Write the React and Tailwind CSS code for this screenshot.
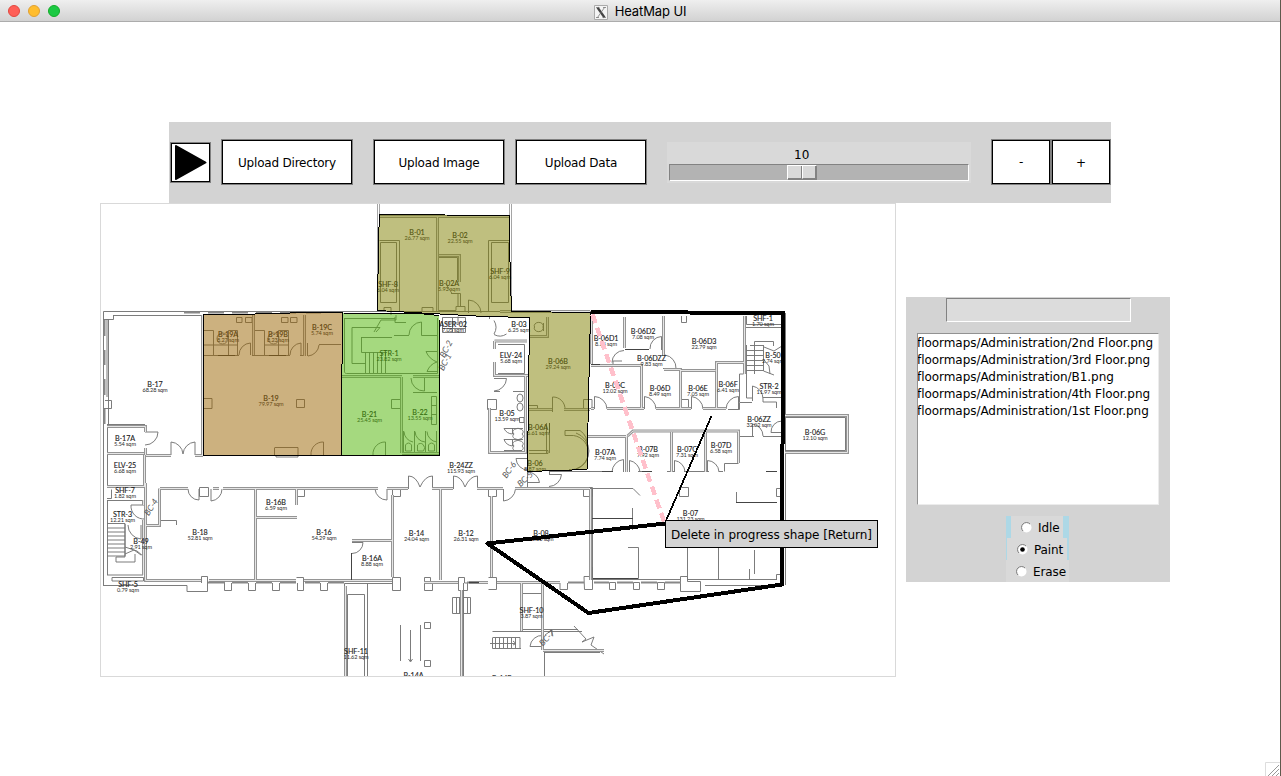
import React from "react";

const rooms = [
  ["B-17", 155, 384, "68.28"], ["B-19A", 228, 334, "8.27"], ["B-19B", 278, 334, "8.23"],
  ["B-19C", 322, 327, "5.74"], ["B-19", 271, 398, "79.97"], ["B-01", 417, 232, "26.77"],
  ["B-02", 460, 235.5, "22.55"], ["SHF-8", 388, 284.5, "6.04"], ["B-02A", 449, 283, "5.93"],
  ["SHF-9", 500, 271, "6.04"], ["ASER-02", 453, 324.5, "7.05"], ["B-03", 519, 324, "6.25"],
  ["STR-1", 389, 353.5, "23.82"], ["ELV-24", 511, 355.5, "5.68"], ["B-06B", 558, 361, "29.24"],
  ["B-21", 369.5, 414, "25.45"], ["B-22", 420, 412.5, "13.55"], ["B-05", 507, 413, "13.59"],
  ["B-06A", 538, 427.5, "6.61"], ["B-06", 535, 463.5, "8.87"], ["B-06D1", 606, 338, "8.13"],
  ["B-06D2", 643, 331, "7.08"], ["B-06D3", 704, 341, "22.79"], ["B-06DZZ", 651.5, 358.5, "9.83"],
  ["B-06C", 615, 385, "12.02"], ["B-06D", 660, 388, "8.49"], ["B-06E", 698, 388, "7.05"],
  ["B-06F", 728, 384, "6.41"], ["SHF-1", 763, 318, "1.70"], ["B-50", 773, 355, "2.74"],
  ["STR-2", 769, 386.5, "11.97"], ["B-06ZZ", 759, 419.5, "32.02"], ["B-06G", 815, 432, "12.10"],
  ["B-07A", 605, 452, "7.74"], ["B-07B", 648, 449, "7.92"], ["B-07C", 687, 449, "7.31"],
  ["B-07D", 721, 445, "6.58"], ["B-17A", 125, 438, "5.54"], ["ELV-25", 125, 465, "6.68"],
  ["SHF-7", 125, 490.5, "1.82"], ["STR-3", 122.5, 514.5, "12.21"], ["B-49", 141, 541, "2.91"],
  ["SHF-5", 128, 584, "0.79"], ["B-18", 200, 532, "52.81"], ["B-16B", 276, 502, "6.59"],
  ["B-16", 324, 532, "54.29"], ["B-24ZZ", 461, 465, "115.93"], ["B-14", 416.5, 533.5, "24.04"],
  ["B-12", 466, 533.5, "26.31"], ["B-08", 541, 533.5, "52.36"], ["B-07", 690.5, 513.5, "131.23"],
  ["B-16A", 372, 558, "8.88"], ["SHF-10", 531.5, 610, "3.87"], ["SHF-11", 356, 651, "11.62"],
  ["B-14A", 413.5, 675.5, ""], ["B-14B", 502, 678, ""],
];

const passages = [
  ["BC-4", 151, 507, -58], ["BC-6", 509, 470, -55], ["BC-5", 525, 479, -42],
  ["BC-7", 547, 638, -45], ["BC-2", 446, 349, -62], ["BC-1", 445, 362, -62],
];

// Double-line walls: drawn once wide and dark, then again with a light core.
const walls = [
  "M202.5 315V455M146 455.5H171M195 455.5H203",
  "M107 426.500H145.500V432M145.500 448V455M107 453.500H144M144.500 455V487M107 486.500H144M143.500 500V505M143.500 520V575",
  "M145.5 483V525M160 488.5H188M213 488.5H219M223 488.5H378M387 488.5H408M432 488.5H453M477 488.5H503M515 488.5H589",
  "M159.500 488.5V525.500H146M145.500 525V580.5H201M209 580.5H296M304 580.5H392",
  "M255.5 489V580M256 517.5H297M296.500 489V505M392.500 495V577M352 540.500H393",
  "M440.5 489V580M491.500 496V577M590.500 489V580M424 582.500H458M469 582.500H488M497 582.500H560",
  "M437.5 217V311M380 216.500H509M439 255.500H459.500V282M500 311.5H590",
  "M253.500 315V355M304.500 315V356",
  "M342 376.5H402M413 376.5H439M401.500 377V453M402 453.500H439",
  "M494.500 341H527M494.500 341V349M494.500 362V375.500H528M489.500 408V452.500H525.500V376",
  "M547.500 317V336.500H530M529 409.500H552M564 409.500H590",
  "M591.500 317V364M624.5 317V348M663.5 316V356M591 365.5H641.500V408M664 369.500H680.500V408M680 370.500H715.500M716.500 408V362.500H744M744.500 316V374",
  "M591 408.500H594M607 408.500H644M656 408.500H691M703 408.500H726",
  "M588 436.500H626M627.500 436L633 431H738.500V463M626.500 436V472M671.500 432V472M705.5 431V472",
  "M785 415.500H847.5V452.500H785",
  "M345.5 677V586M461.5 590V677M521.500 583V631M542.500 583V650M543 650.500H604",
];

const thin = [
  "M103.500 585V311.500H785M113.5 315.5H202M108.5 319V425M103 319.500H113.500V315M103 585.500H187V591.500H207.500V583",
  "M107 319V397M105 400.500H111.500V408.500H104",
  "M107 424.5H145M107.500 427V487M107.500 500V575M107 498.500H111.500V489.500M107 500.500H143",
  "M112 577.500H143.500V581H112ZM107 523.500H125V556H107M107 575H143M125 524V557H116V562H135V554M107 528H125M107 532H125M107 536H125M107 540H125M107 544H125M107 548H125M107 552H125M125 547L137 551L143 556M125 554L134 550L141 555",
  "M145 432H158A13 13 0 0 1 145 445M171 455V442A13 13 0 0 1 183 454A13 13 0 0 1 195 442V455",
  "M145 519A13 13 0 0 1 131 505H145M128 525A14 14 0 0 0 141 539V525M188 489A11 11 0 0 0 199 500V489M211 489V501A12 12 0 0 0 222 489M375 489A12 12 0 0 0 387 500V489",
  "M160 520.500H176.500V525M199.500 487.500H208.500V496.500H199.500ZM296.500 487.500H304.500V496.500H296.500ZM392.500 487.500H400.500V496.500H392.500ZM488.500 487.500H496.500V496.500H488.500ZM583.500 487.500H592.500V496.500H583.500Z",
  "M201.500 398.500H212V408.500H201.500ZM296.500 399.500H304.500V407.500H296.500ZM391.500 399.500H400.500V408.500H391.500ZM487.500 399.500H496.500V409.500H487.500ZM488.500 577.500H496.500V589.500H488.500",
  "M204 355.500H239M252 355.500H290M300 355.500H305M319 344.500H341M204 330.500H213.500V355M204 345H238M237.500 355V330.500H228.500V355M236.500 317.500H242V322.500H236.500ZM245.500 317.500H252V322.500H245.500ZM281.500 317.500H288V322.500H281.500ZM290.500 317.500H297V322.500H290.500ZM254.500 330.500H264.500V355M265 345H288M288.500 355V330.500H278.500V355",
  "M217 338.500A5.500 5.500 0 1 0 228 338.500A5.500 5.500 0 1 0 217 338.500M268 338.500A5.500 5.500 0 1 0 279 338.500A5.500 5.500 0 1 0 268 338.500",
  "M239 355A12 12 0 0 1 250.500 343V355M290 355A12 12 0 0 1 301 343V355M308 356A12 12 0 0 0 319 345M307.500 356V343M311 455A12 12 0 0 1 323.500 442V455M274.500 447.500H298V457H276V455M274.500 448V455",
  "M379.500 240.500H399.500V311M380.500 242.500H396.500V302.500H380.500ZM509 240.500H488.500V311M491.500 242.500H508.5V302.500H491.5ZM439 257.500H457.500V280M446 284L452 293.500H460.500V306M451 293.500H458V306M468.5 313V300A13 13 0 0 1 481 313M439 310.500H456V306.500H465V311M422 311V307.500H433V311M384 311V307.500H391V315",
  "M344 318.500H395M344.500 318V371A2 2 0 0 0 346.500 373.500H437.500V318M352 363.500V327.500H380L376 332M352 363.500H366M361 337.500H392M361.500 337V352.500H387M365.500 352V373M369.500 352V373M373.500 352V373M377.500 352V373M381.500 352V373M385.500 352V373M374 332L381 320H396V315",
  "M395 317V322.500H406M409 335A13 13 0 0 1 421.500 322V335.500H437M394 335.500H409M437 351.500H426Q429 359 437 362Q430 364 427 371.500H437M411 378A13 13 0 0 0 424.500 391V378M413 392.500H437",
  "M373 455A12 12 0 0 1 385.500 442V455M404 431.500A11 11 0 0 0 413 442M415 431.500A11 11 0 0 0 425 442M427 431.500A11 11 0 0 0 437 442M403.500 431V452M414.500 431V452M425.500 431V452M436.500 431V452M405.500 451V445A3.500 4 0 0 1 411.500 445V451ZM417.500 451V445A3.500 4 0 0 1 423.500 451V451ZM428.500 451V445A3.500 4 0 0 1 434.500 445V451Z",
  "M431.500 396.500H436.500V424.500H431.500ZM431 405.500H437M431 414.500H437",
  "M498 344.500H524.500V373.500H498M494 334.500A12 12 0 0 0 506.500 334M494 334A13 13 0 0 0 494 320.500M494 391A13 13 0 0 0 506.500 378.500H494M494 391.500H500M513 391.500H527M517 398A3 4 0 1 0 523 398A3 4 0 1 0 517 398M517 407A3 4 0 1 0 523 407A3 4 0 1 0 517 407M519.500 417.500H524V422.500H519.500ZM512.500 428V434A10 10 0 0 1 504 428.500H523M512.500 440V446A10 10 0 0 1 504 439.500H523M512.500 451A10 10 0 0 1 504 450.500H522M514 434A5 3.500 0 1 0 522 434A5 3.500 0 1 0 514 434M514 446A5 3.500 0 1 0 522 446A5 3.500 0 1 0 514 446",
  "M489.500 319V316M458 316.500V322.500M442.500 317.500H465.500V332.500H442.500ZM452.500 318V333M445 323H462M442 328.500H465",
  "M534.500 327A4.500 3.500 0 1 0 543 327A4.500 3.500 0 1 0 534.500 327M543.500 323V331M552.500 412V397A12 12 0 0 1 565 410M549.500 423V453M546.500 423V453M529 405.500H537.500V410M583.500 399.500H592V408.500H583.500Z",
  "M565 430.500H580Q588 436 587 446M565 430.500V435.500H573.500A17 17 0 0 1 569 469.500M576 433A19 19 0 0 1 576 469M529 450.500H548V453.500H529",
  "M528 458.500H516A12 12 0 0 0 528 470M527.500 487V472A12 12 0 0 1 539.500 482.500H528M549 474.500H561.500A13 13 0 0 1 549 486.500M549 471.500H590M549.500 474V471",
  "M681.500 316V322.500H686.500V316M612 362.500A12 12 0 0 1 624 350.500M613 364V361H622M650 349A12 12 0 0 1 661.500 336.500V350M665 355A13 13 0 0 1 676 368.500H663M594.500 409V396.500A13 13 0 0 1 607 409M644.500 409V396.500A13 13 0 0 1 656 409M691.500 409V396.500A13 13 0 0 1 703 409M738.500 409V396.500A13 13 0 0 0 726 409M728 409.500H739.500V402.500H752",
  "M680.500 399.500H688.500V409H680.500ZM623.500 472V459.500A13 13 0 0 0 612 472M629.500 472V460.500A13 13 0 0 1 640 472M674.500 472V460.500A12 12 0 0 1 685 472M707.500 472V460.500A12 12 0 0 1 719 472M738.500 463.500H724.500V471.500",
  "M588 471.500H613M638 471.500H652M667 471.500H674M684 471.500H709M719 471.500H723",
  "M746.500 316V324.500H781M746 327.500H781M750 345.500H763M746 350.500H763M746 355.500H763M746 360.500H763M746 365.500H763M746 370.500H763M754.500 374V341.500H773.500V346M763.500 345V371L774 375M764 347L774 351L782 346M764 360L769 366L770 374M746.500 345V398H752M743.500 374H739.500V402M752.500 401V386A13 13 0 0 1 763 399V402H776.500V408M763 397.500H782M782 421A11 11 0 0 0 771 432.500H782M752.500 436V424A12 12 0 0 1 763 436M739 436.500H754M763 436.500H782",
  "M785.500 313V585M785 417.500H845.500V450.500H785M679.500 487.500H688.500V496.500H679.500ZM776.500 488.500H781V496.500H776.500ZM782 574.500H776.500V580",
  "M590 488.500H633L640 495.500M592 518.500H633M632.500 508V530M628 547.500H638.500V578.500H592.500V567M687.500 547V579.500H777M718.500 547V580M736.500 492V502.500H777M766 471.500H777M754.500 550V574M749.500 569V580M592 579.500H680M592.500 489V577",
  "M584 576.500H592.500V589.500H584.500ZM609.500 582.500H615.500V589.500H609.500ZM633.500 582.500H639.500V589.500H633.500ZM657.500 582.500H664.500V589.500H657.500ZM680.500 576.500H687.500V581.500H700.500V591.500H680.500ZM560 583V589.500H567.500V583M705 585.500H782",
  "M224.500 583V590.500H231.500V583M248.500 583V590.500H255.500V583M272.500 583V590.500H279.500V583M296.500 577.500H303.500V590.500H297.500V583M320.500 583V590.500H327.500V583M201.500 583V576.500H207.500V583",
  "M392.500 583V577.500H400.500V590.500H392.500ZM424.500 583V577.500H430.500V581.500H432.500V590.500H424.500ZM458.500 583V577.500H464.500V583H467.500V590.500H458.500Z",
  "M408.500 489V476Q416 476 420 487Q425 476 432.500 476V489M453.500 489V476Q461 476 465 487Q470 476 477.500 476V489M503.500 489V501A13 13 0 0 0 515.500 489",
  "M352 542.500H363A11 11 0 0 1 352 553.500M344.500 677V583.500H392M367.500 677V583.500M347.500 677V594.500H364.500V677M400.500 625V661M420.500 625V661M410.500 630V661M408.500 659L410.500 662L412.500 659M424.500 622.500H430.500V628.500H424.500ZM424.500 660.500H430.500V666.500H424.500Z",
  "M452.500 597.500H470.500V613.500H452.500ZM456.500 598V613M459.500 598V613M463.500 598V613M467.500 598V613M522.500 593.500H541.500V628M522.500 593.500V628M492.500 631.500H521M492.500 637.500V648.500H521M490 643.500H516M493 637.500H520V648M513 641L516 643.500L513 645M495.500 638V648M499.500 638V648M503.500 638V648M507.500 638V648M511.500 638V648M515.500 638V648",
  "M530 646.500A12 12 0 0 1 543 635.500M530 646.500H543M545 635L552 630V636M521 629.500H578M521 631.500H582M574 626L586 639L582 642L594 637L591 645L604 654M544 652.500H600M463.500 583V677M544.500 677V652",
];

const windows = [
  "M104.500 320V336M104.500 350V365M104.500 379V395M104.500 409V424",
  "M184 312.500H200M208 312.500H224M232 312.500H248M256 312.500H272M280 312.500H296M306 312.500H321",
  "M208 582.500H225M232 582.500H248M256 582.500H272M280 582.500H296M305 582.500H320M328 582.500H344M467 582.500H479M568 582.500H584M594 582.500H609M617 582.500H633M641 582.500H657M665 582.500H681",
];

function FloorPlan() {
  return (
    <svg className="block h-[472px] w-[794px]" viewBox="101 204 794 472" fontFamily="Lato, sans-serif">
      <g fill="none">
        {thin.map((d) => <path key={d} d={d} stroke="#757575" strokeWidth="0.95" />)}
        {walls.map((d) => <path key={d} d={d} stroke="#959595" strokeWidth="3" />)}
        {walls.map((d) => <path key={d} d={d} stroke="#e6e6e6" strokeWidth="1" />)}
        {windows.map((d) => <path key={d} d={d} stroke="#888" strokeWidth="2" />)}
        <path d="M377.500 204V311M379.500 204V215M509.500 204V215M511.500 204V311" stroke="#a5a5a5" strokeWidth="1" />
        <path d="M351.500 553V580M218 355.500H235M269 355.500H286M602 471.500H613M642 471.500H652M625 349.500H649M591 364.500H600M766 471.500H777M736 502.500H777M592 518.500H633M593 578.500H638M469 582.500H479M549.500 423V433" stroke="#444" strokeWidth="1" />
      </g>
      <g textAnchor="middle" fill="#222">
        {rooms.map(([name, x, y, area]) => (
          <g key={name}>
            <text x={x} y={y + 2.7} fontSize="7.2" stroke="#222" strokeWidth="0.12">{name}</text>
            {area && <text x={x} y={y + 7.7} fontSize="5.6" fill="#2b2b2b">{area} sqm</text>}
          </g>
        ))}
        {passages.map(([name, x, y, turn]) => (
          <text key={name} x={x} y={y + 3} fontSize="8.5" fill="#555" fontStyle="italic" transform={`rotate(${turn} ${x} ${y})`}>{name}</text>
        ))}
      </g>
      <g stroke="none">
        <path fill="#996300" fillOpacity="0.5" d="M203.500 315L238 314.500L308 312.500H342.500V345L341.500 384V455.500H203.500Z" />
        <path fill="#4bb300" fillOpacity="0.5" d="M342.500 313L424 314L439 315.500L439.500 455.500H341.500V384L342.500 345Z" />
        <path fill="#808000" fillOpacity="0.5" d="M379.500 214.500L509.500 215.500V245L511.500 311.500L590.500 312.500L588.500 400L587 469.500L527.500 471.500L529.500 317.500L485 316.500L377.500 310.500L378.500 240Z" />
      </g>
      <g fill="none" stroke="#000" shapeRendering="crispEdges">
        <path strokeWidth="1" d="M203.500 315L238 314.500L308 312.500H342.500V345L341.500 384V455.500H203.500Z" />
        <path strokeWidth="1" d="M342.500 313L424 314L439 315.500L439.500 455.500H341.500V384" />
        <path strokeWidth="1" d="M379.500 214.500L509.500 215.500V245L511.500 311.500L590.500 312.500L588.500 400L587 469.500L527.500 471.500L529.500 317.500L485 316.500L377.500 310.500L378.500 240Z" />
        <path strokeWidth="4" d="M591.500 312L783 313L782 584.500L588.500 613L487.500 543.500L665 523.500" strokeLinejoin="round" strokeLinecap="butt" />
        <path strokeWidth="1.800" d="M665 523L711.500 416" />
        <path strokeWidth="4.500" stroke="#ffc0cb" strokeDasharray="9 5" d="M592.500 314.500L664.500 523" />
      </g>
    </svg>
  );
}

function ToolButton({ className, children }) {
  return (
    <button className={`flex shrink-0 items-center justify-center border border-[#808080] bg-white shadow-[inset_0_0_0_1px_#000] ${className}`}>
      {children}
    </button>
  );
}

function Toolbar() {
  return (
    <div className="ml-[169px] mt-[100px] flex h-[81px] w-[942px] shrink-0 items-center bg-[#d3d3d3] pb-px tracking-[-0.2px]">
      <ToolButton className="ml-px h-[41px] w-[41px]">
        <svg className="h-[37px] w-[37px]" viewBox="0 0 37 37">
          <path d="M4 2L33.500 18.500L4 35Z" fill="#000" stroke="#000" strokeWidth="2" strokeLinejoin="round" />
        </svg>
      </ToolButton>
      <ToolButton className="ml-[10px] h-[46px] w-[132px] pt-[2px]">Upload Directory</ToolButton>
      <ToolButton className="ml-5 h-[46px] w-[132px] pt-[2px]">Upload Image</ToolButton>
      <ToolButton className="ml-[10px] h-[46px] w-[132px] pt-[2px]">Upload Data</ToolButton>
      <div className="ml-5 flex h-[41px] w-[304px] shrink-0 flex-col bg-[#d9d9d9] px-[2px] pb-[2px]">
        <div className="h-[22px] pl-[125px] pt-[5px] leading-4 tracking-[0.2px]">10</div>
        <div className="h-[17px] border border-b-white border-l-[#828282] border-r-white border-t-[#828282] bg-[#b3b3b3]">
          <div className="ml-[117px] flex h-[15px] w-[30px] border border-b-[#828282] border-l-white border-r-[#828282] border-t-white bg-[#d9d9d9]">
            <div className="w-[14px] border-b border-r border-[#828282]" />
            <div className="w-[14px] border-b border-l border-r border-b-[#828282] border-l-white border-r-[#828282]" />
          </div>
        </div>
      </div>
      <ToolButton className="ml-5 h-[46px] w-[60px]">-</ToolButton>
      <ToolButton className="h-[46px] w-[60px] pt-[2px]">+</ToolButton>
    </div>
  );
}

function Radio({ checked }) {
  return (
    <svg className="h-[11px] w-[11px] shrink-0" viewBox="0 0 11 11">
      <circle cx="5.500" cy="5.500" r="5" fill="#fff" />
      <path d="M2 9A4.800 4.800 0 0 1 9 2" fill="none" stroke="#777" />
      {checked && <circle cx="5.500" cy="5.500" r="2.300" fill="#000" />}
    </svg>
  );
}

const files = ["2nd Floor", "3rd Floor", "B1", "4th Floor", "1st Floor"];

function SidePanel() {
  return (
    <div className="ml-[10px] mt-[94px] flex h-[285px] w-[264px] flex-col bg-[#d3d3d3]">
      <div className="ml-10 mt-px h-6 w-[185px] shrink-0 border border-b-white border-l-[#828282] border-r-white border-t-[#828282] bg-[#dcdcdc]" />
      <div className="ml-[11px] mt-[11px] h-[172px] w-[242px] shrink-0 overflow-hidden border border-b-[#ececec] border-l-[#929292] border-r-[#ececec] border-t-[#929292] bg-white">
        {files.map((f) => (
          <div key={f} className="-ml-px h-[17px] whitespace-nowrap leading-[19px] tracking-[-0.05px]">floormaps/Administration/{f}.png</div>
        ))}
      </div>
      <div className="ml-[100px] mt-[11px] flex w-[63px] flex-col bg-[#d9d9d9]">
        <div className="flex h-[22px] items-center border-l-[5px] border-r-[6px] border-[#add8e6] pl-[10px]">
          <Radio /><span className="ml-[6px] pt-[2px]">Idle</span>
        </div>
        <div className="flex h-[22px] items-center border-l border-r-2 border-[#add8e6] pl-[10px]">
          <Radio checked /><span className="ml-[6px] pt-[2px]">Paint</span>
        </div>
        <div className="flex h-[22px] items-center pl-[10px]">
          <Radio /><span className="ml-[6px] pt-[2px]">Erase</span>
        </div>
      </div>
    </div>
  );
}

export default function App() {
  return (
    <div className="relative flex h-[776px] w-[1281px] flex-col overflow-hidden border-r border-[#5d5a4d] bg-white font-['DejaVu_Sans',sans-serif] text-[12px] tracking-[-0.1px] text-black">
      <header className="relative flex h-[22px] shrink-0 items-center justify-center gap-[7px] border-b border-[#acacac] bg-linear-to-b from-[#efefef] to-[#d2d2d2] pt-[3px] font-['Inter',sans-serif] text-[13px] tracking-[-0.1px]">
        <div className="absolute left-2 top-[5px] flex gap-2">
          <span className="h-3 w-3 rounded-full border border-[#e2483f] bg-[#ff5f57]" />
          <span className="h-3 w-3 rounded-full border border-[#e0a032] bg-[#ffbd2e]" />
          <span className="h-3 w-3 rounded-full border border-[#12ac28] bg-[#1bc943]" />
        </div>
        <svg className="h-[15px] w-[14px]" viewBox="0 0 14 15">
          <path d="M.5.5H13.500V14.500H.5Z" fill="#f4f4f4" stroke="#aaa" />
          <path d="M3.500 2.500L10.500 12.500" stroke="#444" strokeWidth="2.200" />
          <path d="M10.500 2.500L3.500 12.500M2 2.500H5.500M9 2.500H12M2 12.500H5M8.500 12.500H12" stroke="#777" strokeWidth=".8" />
        </svg>
        <span>HeatMap UI</span>
      </header>
      <Toolbar />
      <main className="ml-[100px] flex">
        <div className="relative h-[474px] w-[796px] shrink-0 border border-[#d9d9d9] bg-white">
          <FloorPlan />
          <div className="absolute left-[564px] top-[316px] flex h-[28px] w-[213px] items-center whitespace-nowrap border border-black bg-[#d3d3d3] pl-[5px] pt-[2px] tracking-[-0.06px]">
            Delete in progress shape [Return]
          </div>
        </div>
        <SidePanel />
      </main>
      <svg className="absolute bottom-0 right-0 h-[14px] w-[15px]" viewBox="0 0 15 14">
        <path d="M.5 14V.5H15" fill="none" stroke="#ddd" />
        <path d="M3 14L14 3M7 14L14 7M11 14L14 11" stroke="#999" strokeWidth="1" />
      </svg>
    </div>
  );
}
